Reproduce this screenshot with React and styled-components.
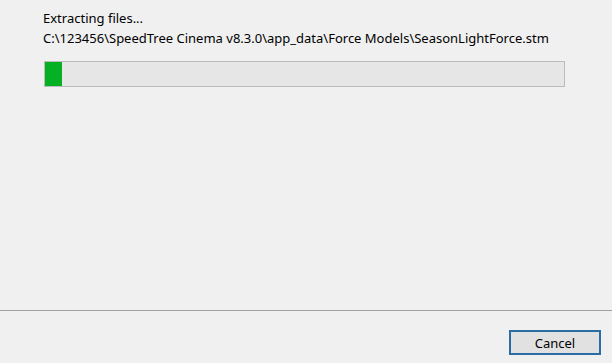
import React from "react";
import styled, { createGlobalStyle } from "styled-components";

const GlobalStyle = createGlobalStyle`
  html, body {
    margin: 0;
    padding: 0;
    background: #f0f0f0;
  }
  body {
    font-family: "Noto Sans", "Open Sans", sans-serif;
    font-size: 13px;
    color: #000;
  }
`;

const Dialog = styled.div`
  width: 612px;
  height: 363px;
  display: flex;
  flex-direction: column;
  background: #f0f0f0;
`;

const Body = styled.div`
  flex: 1;
  padding: 8px 40px 0 43px;
`;

const Label = styled.div`
  line-height: 20px;
  white-space: nowrap;
`;

const Track = styled.div`
  margin-top: 13px;
  margin-left: 1px;
  width: 521px;
  height: 26px;
  box-sizing: border-box;
  border: 1px solid #bcbcbc;
  background: #e6e6e6;
`;

const Fill = styled.div`
  height: 100%;
  background: #06b025;
`;

const Footer = styled.div`
  height: 53px;
  border-top: 1px solid #a0a0a0;
  display: flex;
  justify-content: flex-end;
  align-items: flex-start;
  padding: 19px 11px 0 0;
  box-sizing: border-box;
`;

const Button = styled.button`
  width: 92px;
  height: 25px;
  box-sizing: border-box;
  border: 2px solid #2c6ca4;
  background: #e1e1e1;
  font-family: "Noto Sans", "Open Sans", sans-serif;
  font-size: 13px;
  color: #000;
  padding: 0;
`;

export default function App() {
  const progress = 3.3;
  return (
    <Dialog>
      <GlobalStyle />
      <Body>
        <Label>Extracting files...</Label>
        <Label>C:\123456\SpeedTree Cinema v8.3.0\app_data\Force Models\SeasonLightForce.stm</Label>
        <Track>
          <Fill style={{ width: `${progress}%` }} />
        </Track>
      </Body>
      <Footer>
        <Button>Cancel</Button>
      </Footer>
    </Dialog>
  );
}
